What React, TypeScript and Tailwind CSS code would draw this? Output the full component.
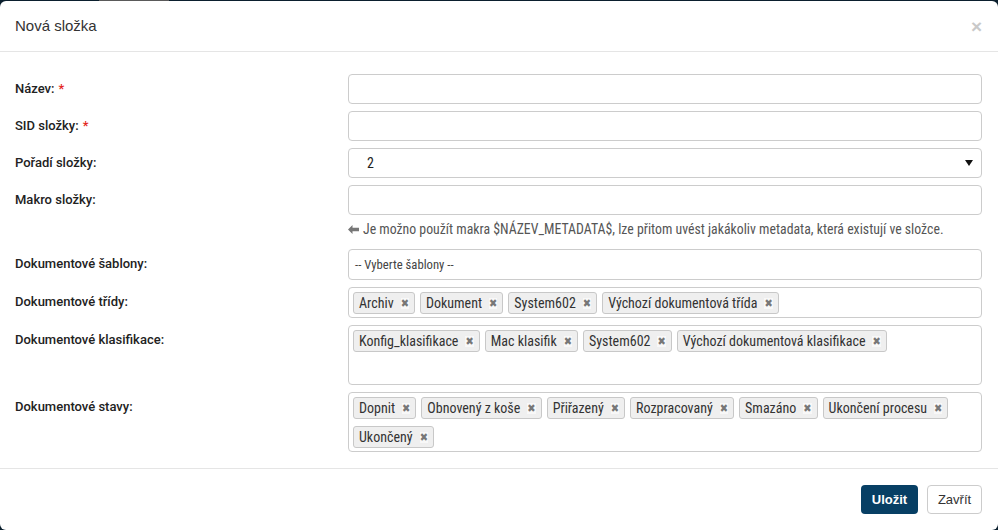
import React from "react";

const sans = { fontFamily: '"Liberation Sans", Arial, sans-serif' };
const narrow = { fontFamily: 'Roboto, "DejaVu Sans Condensed", sans-serif' };
const labelFont = { fontFamily: 'Roboto, "Liberation Sans", sans-serif' };

function Tag({ text }: { text: string }) {
    return (
        <span
            className="inline-flex h-[22px] items-center rounded-[3px] border border-[#c8c8c8] bg-[#efefef] pl-[5px] pr-[5px] text-[14px] leading-none text-[#333] font-stretch-condensed"
            style={narrow}
        >
            {text}
            <span
                className="ml-[7px] bg-[#f8f8f8] text-[11px] leading-none text-[#777]"
                style={{ fontFamily: '"DejaVu Sans", sans-serif' }}
            >
                ✖
            </span>
        </span>
    );
}

function Row({ label, required, children }: { label: string; required?: boolean; children: React.ReactNode }) {
    return (
        <div className="flex items-start">
            <div className="w-[333px] shrink-0 pt-[7px] text-[13px] font-medium leading-[16px] text-[#222]" style={labelFont}>
                {label}
                {required && <span className="ml-[4px] text-[#e4261d]">*</span>}
            </div>
            <div className="flex-1">{children}</div>
        </div>
    );
}

function TagBox({ tags, minH }: { tags: string[]; minH?: boolean }) {
    return (
        <div
            className={
                "flex flex-wrap content-start gap-x-[5px] gap-y-[7px] rounded-[4px] border border-[#ccc] bg-white pb-[3px] pl-[4px] pr-[4px] pt-[4px] " +
                (minH ? "min-h-[60px]" : "")
            }
        >
            {tags.map(t => (
                <Tag key={t} text={t} />
            ))}
        </div>
    );
}

const inputCls = "h-[30px] w-full rounded-[4px] border border-[#ccc] bg-white";

export default function App() {
    return (
        <div className="h-[530px] w-[998px] overflow-hidden bg-[#0b1f2e]" style={sans}>
            <div className="flex h-px">
                <div className="w-[99px]" />
                <div className="w-[70px] bg-[#5a5a5a]" />
            </div>
            <div className="flex h-[529px] flex-col rounded-[6px] bg-white">
                {/* header */}
                <div className="flex h-[51px] items-center justify-between border-b border-[#e5e5e5] pl-[15px] pr-[16px]">
                    <h4 className="text-[15px] text-[#333]">Nová složka</h4>
                    <span className="text-[19px] font-bold leading-none text-[#c9c9c9]">×</span>
                </div>

                {/* body */}
                <div className="flex flex-col gap-[7px] pb-[16px] pl-[15px] pr-[16px] pt-[22px]">
                    <Row label="Název:" required>
                        <div className={inputCls} />
                    </Row>
                    <Row label="SID složky:" required>
                        <div className={inputCls} />
                    </Row>
                    <Row label="Pořadí složky:">
                        <div className={inputCls + " flex items-center justify-between pl-[18px] pr-[8px]"}>
                            <span className="text-[14px] text-[#222] font-stretch-condensed" style={narrow}>2</span>
                            <svg width="8" height="6" viewBox="0 0 8 6">
                                <path d="M0 0 L8 0 L4 6 Z" fill="#111" />
                            </svg>
                        </div>
                    </Row>
                    <Row label="Makro složky:">
                        <div className={inputCls} />
                        <p
                            className="mb-[5px] mt-[6px] flex items-center whitespace-nowrap text-[13.8px] leading-[16px] text-[#555] font-stretch-condensed"
                            style={narrow}
                        >
                            <svg width="11" height="9" viewBox="0 0 11 9" className="mr-[4px]">
                                <path d="M0 4.5 L4.5 0 L4.5 2.8 L11 2.8 L11 6.2 L4.5 6.2 L4.5 9 Z" fill="#777" />
                            </svg>
                            Je možno použít makra $NÁZEV_METADATA$, lze přitom uvést jakákoliv metadata, která existují ve složce.
                        </p>
                    </Row>
                    <Row label="Dokumentové šablony:">
                        <div
                            className="flex h-[31px] items-center rounded-[4px] border border-[#ccc] pl-[6px] text-[12.7px] text-[#444] font-stretch-condensed"
                            style={narrow}
                        >
                            -- Vyberte šablony --
                        </div>
                    </Row>
                    <Row label="Dokumentové třídy:">
                        <TagBox tags={["Archiv", "Dokument", "System602", "Výchozí dokumentová třída"]} />
                    </Row>
                    <Row label="Dokumentové klasifikace:">
                        <TagBox minH tags={["Konfig_klasifikace", "Mac klasifik", "System602", "Výchozí dokumentová klasifikace"]} />
                    </Row>
                    <Row label="Dokumentové stavy:">
                        <TagBox
                            tags={["Dopnit", "Obnovený z koše", "Přiřazený", "Rozpracovaný", "Smazáno", "Ukončení procesu", "Ukončený"]}
                        />
                    </Row>
                </div>

                {/* footer */}
                <div className="flex justify-end gap-[9px] border-t border-[#e5e5e5] pr-[16px] pt-[16px]">
                    <button className="h-[29px] w-[57px] rounded-[4px] bg-[#073f64] text-[13px] font-bold text-white">Uložit</button>
                    <button className="h-[29px] w-[55px] rounded-[4px] border border-[#ccc] bg-white text-[13px] text-[#333]">Zavřít</button>
                </div>
            </div>
        </div>
    );
}
